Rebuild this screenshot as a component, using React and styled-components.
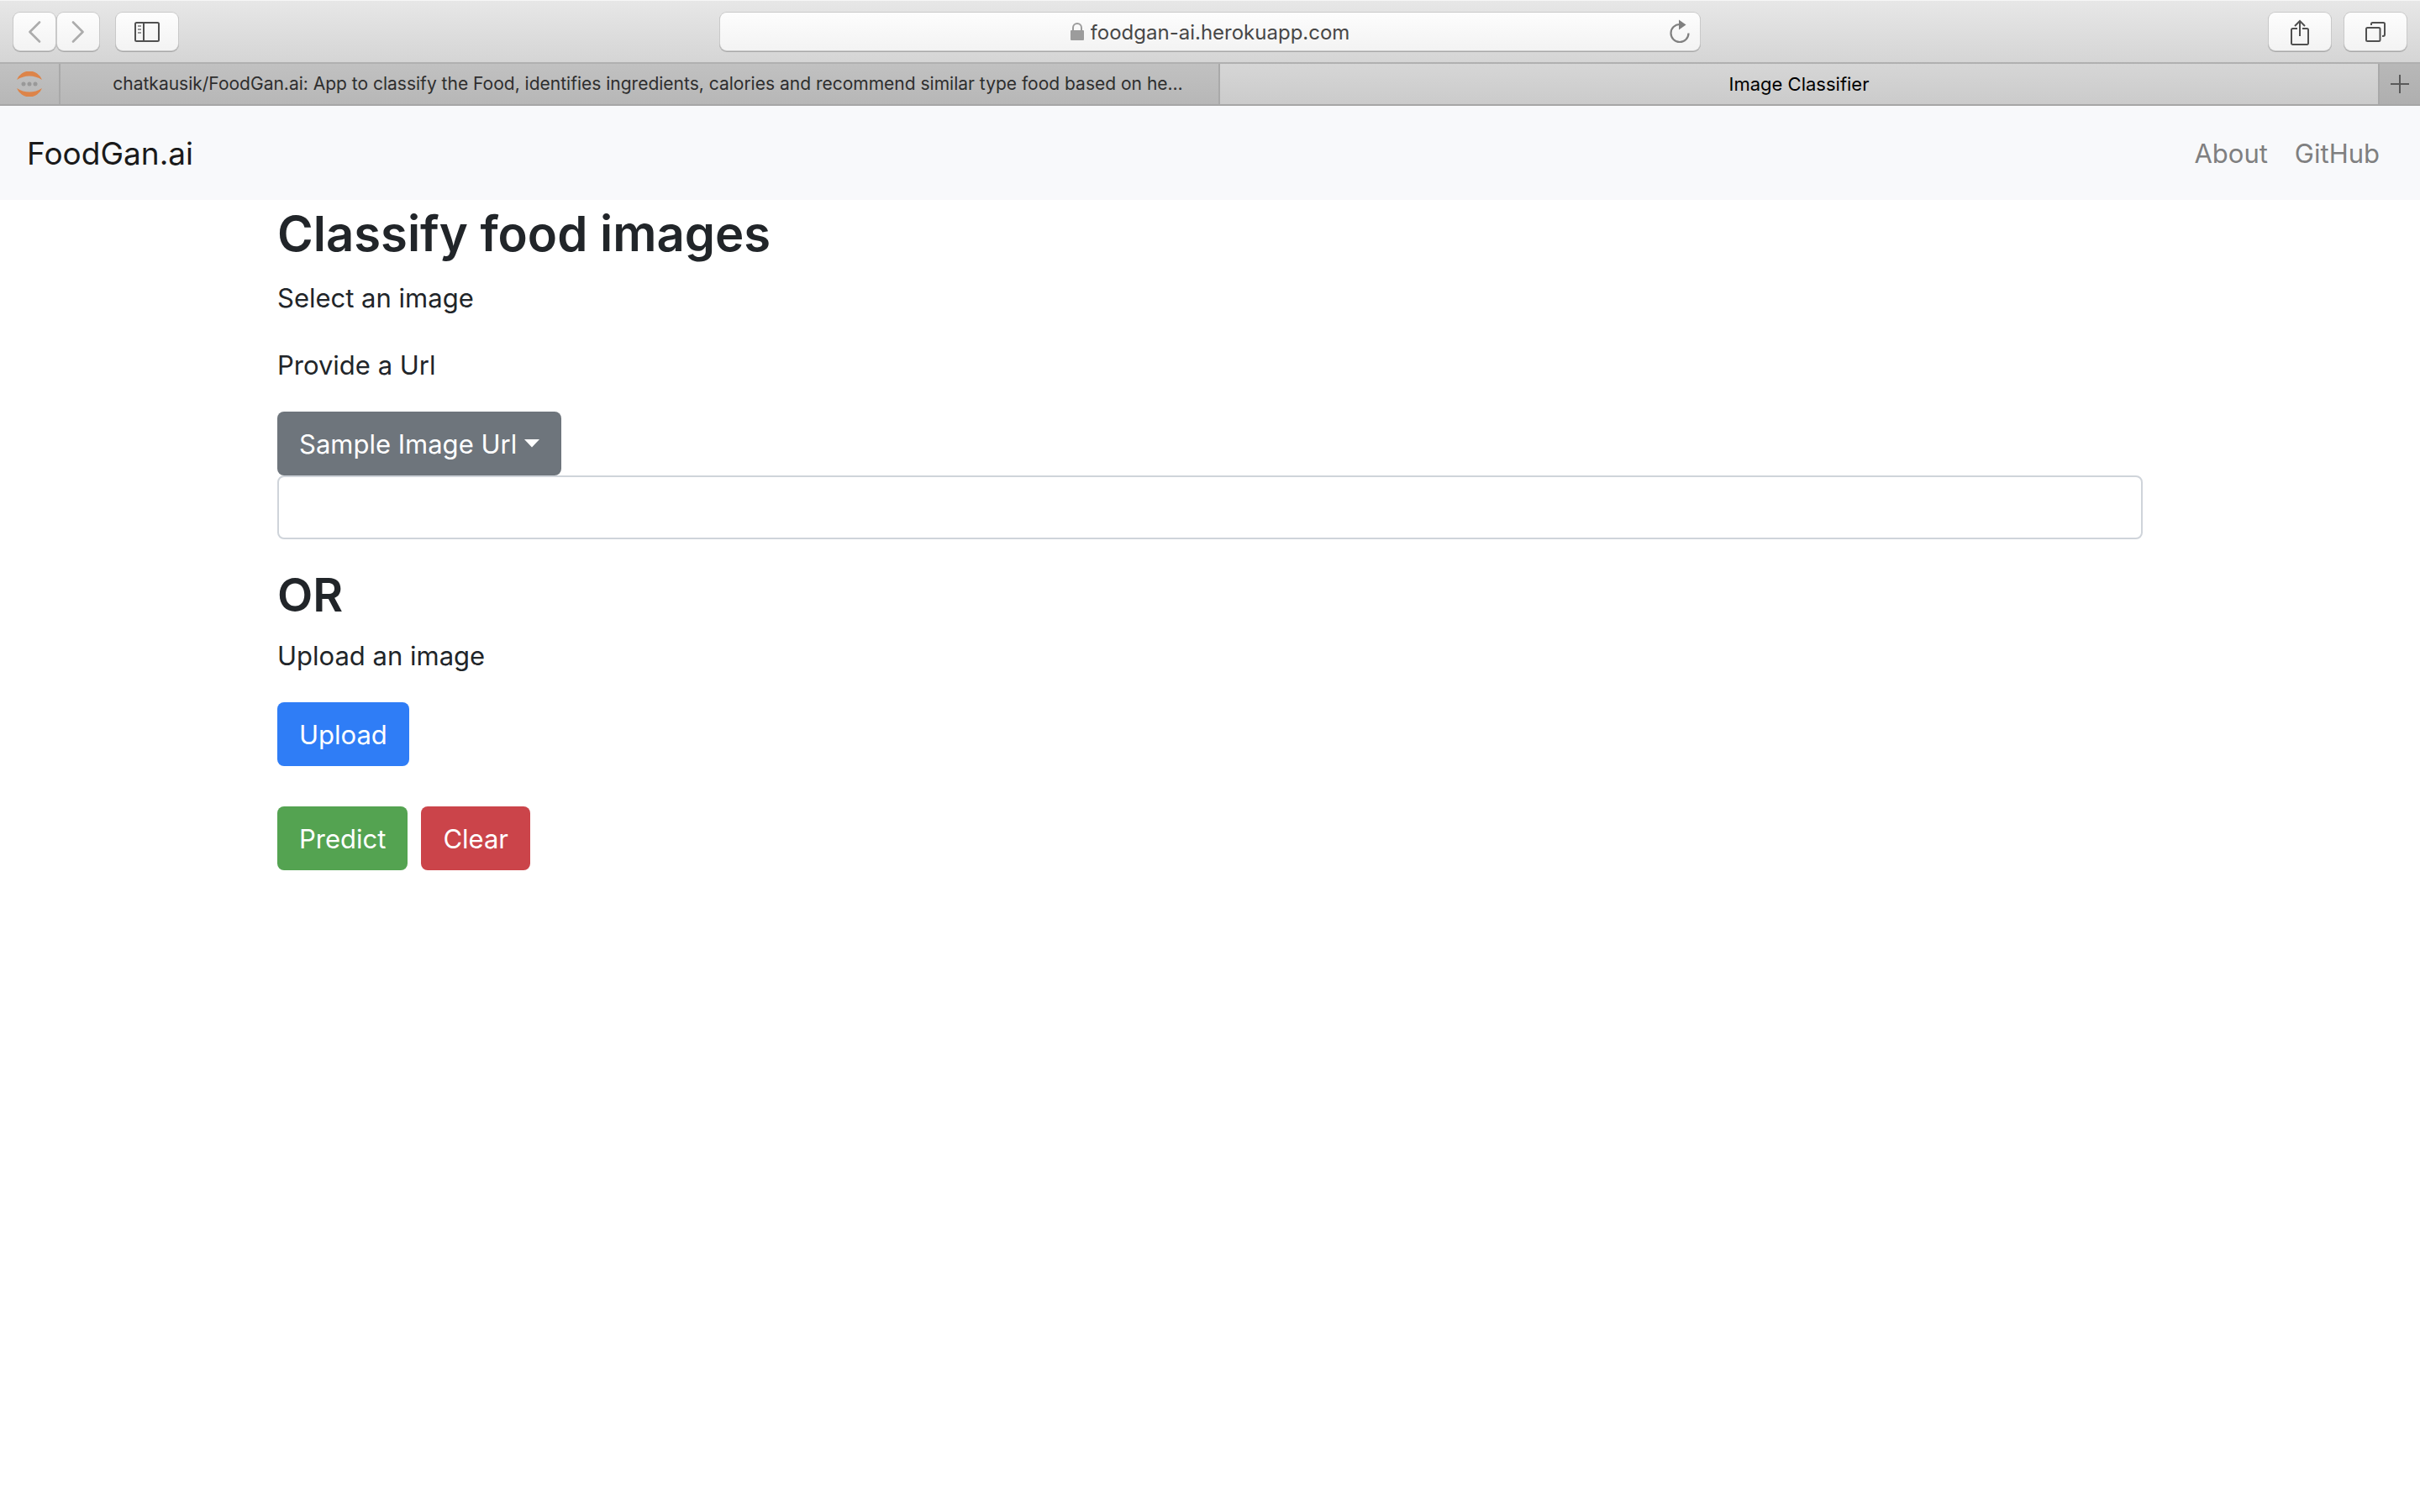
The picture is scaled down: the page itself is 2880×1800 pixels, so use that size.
import React, { useState } from "react";
import styled, { createGlobalStyle } from "styled-components";

const GlobalStyle = createGlobalStyle`
  *, *::before, *::after { box-sizing: border-box; }
  body {
    margin: 0;
    background: #fff;
    color: #212529;
    font-family: Inter, Roboto, "Liberation Sans", sans-serif;
    font-size: 31px;
    line-height: 50px;
  }
  button, input, select { font: inherit; color: inherit; margin: 0; }
`;

/* ---------- Browser window ---------- */

const Toolbar = styled.header`
  display: grid;
  grid-template-columns: 1fr minmax(0, 1166px) 1fr;
  align-items: center;
  height: 76px;
  padding: 0 16px;
  background: linear-gradient(#e7e7e7, #d5d5d5);
  border-top: 1px solid #f6f6f6;
  border-bottom: 2px solid #b0b0b0;
`;

const ToolGroup = styled.div`
  display: flex;
  justify-content: ${(p) => (p.$end ? "flex-end" : "flex-start")};
  gap: ${(p) => (p.$end ? 16 : 20)}px;
`;

const HistoryButtons = styled.div`
  display: flex;
  gap: 2px;
`;

const ToolButton = styled.button`
  display: flex;
  align-items: center;
  justify-content: center;
  width: ${(p) => (p.$wide ? 74 : 50)}px;
  height: 45px;
  padding: 0;
  border: 0;
  border-radius: 8px;
  background: linear-gradient(#fdfdfd, #f3f3f3);
  box-shadow: 0 0 0 1px #c9c9c9, 0 1px 0 1px #a9a9a9;
  color: ${(p) => (p.$muted ? "#acacac" : "#505050")};
`;

const AddressBar = styled.form`
  display: grid;
  grid-template-columns: 1fr auto 1fr;
  align-items: center;
  height: 45px;
  padding: 0 12px;
  border-radius: 8px;
  background: linear-gradient(#fdfdfd, #f3f3f3);
  box-shadow: 0 0 0 1px #c9c9c9, 0 1px 0 1px #a9a9a9;
`;

const Address = styled.label`
  grid-column: 2;
  display: flex;
  align-items: center;
  gap: 8px;
`;

const AddressInput = styled.input`
  field-sizing: content;
  padding: 2px 0 0;
  border: 0;
  outline: 0;
  background: none;
  color: #474747;
  font-size: 24px;
  line-height: 32px;
`;

const ReloadButton = styled.button`
  display: flex;
  justify-self: end;
  padding: 0;
  border: 0;
  background: none;
`;

const TabBar = styled.nav`
  display: grid;
  grid-template-columns: 72px minmax(0, 1fr) minmax(0, 1fr) 48px;
  height: 50px;
  border-bottom: 2px solid #a6a6a6;
  background: linear-gradient(#c1c1c1, #b7b7b7);
`;

const PinnedTab = styled.button`
  display: flex;
  align-items: center;
  justify-content: center;
  padding: 0;
  border: 0;
  border-right: 2px solid #a9a9a9;
  background: none;
`;

const Tab = styled.button`
  padding: 0 ${(p) => (p.$active ? 0 : "26px 0 46px")};
  border: 0;
  border-right: 2px solid #a9a9a9;
  background: ${(p) => (p.$active ? "linear-gradient(#d6d6d6, #cbcbcb)" : "none")};
  color: ${(p) => (p.$active ? "#000" : "#2e2e2e")};
  font-size: ${(p) => (p.$active ? 22 : 21)}px;
  line-height: 48px;
  text-align: center;
  white-space: nowrap;
`;

const NewTab = styled.button`
  display: flex;
  align-items: center;
  justify-content: center;
  padding: 0;
  border: 0;
  background: linear-gradient(#b8b8b8, #afafaf);
  color: #5a5a5a;
`;

/* ---------- Page ---------- */

const Navbar = styled.nav`
  display: flex;
  align-items: center;
  justify-content: space-between;
  padding: 27px 48px 25px 32px;
  background: #f8f9fb;
`;

const Brand = styled.a`
  color: #1a1a1a;
  font-size: 37px;
  line-height: 60px;
  text-decoration: none;
`;

const NavLinks = styled.div`
  display: flex;
  gap: 32px;
`;

const NavLink = styled.a`
  color: #7f7f80;
  text-decoration: none;
`;

const Container = styled.main`
  max-width: 2280px;
  margin: 0 auto;
  padding: 0 30px;
`;

const Title = styled.h1`
  margin: 0 0 12px;
  font-size: 58px;
  line-height: 80px;
  font-weight: 600;
`;

const Divider = styled.h2`
  margin: 0 0 14px;
  font-size: 55px;
  line-height: 68px;
  font-weight: 600;
`;

const Text = styled.p`
  margin: 0 0 30px;
`;

const FieldLabel = styled.label`
  display: block;
  margin: 0 0 30px;
`;

const Dropdown = styled.div`
  display: grid;
  width: max-content;
  align-items: center;
  color: #fff;

  & > * { grid-area: 1 / 1; }
  svg { justify-self: end; margin-right: 26px; pointer-events: none; }
`;

const SampleSelect = styled.select`
  appearance: none;
  height: 76px;
  padding: 2px 52px 0 26px;
  border: 0;
  border-radius: 8px;
  background: #6e757c;
`;

const UrlInput = styled.input`
  display: block;
  width: 100%;
  height: 76px;
  margin: 0 0 32px;
  padding: 12px 24px;
  border: 2px solid #cfd4da;
  border-radius: 8px;
  background: #fff;
`;

const tones = { primary: "#2f7df6", success: "#54a351", danger: "#cb444a" };

const Button = styled.button`
  padding: 14px 26px 12px;
  border: 0;
  border-radius: 8px;
  background: ${(p) => tones[p.$tone]};
  color: #fff;
`;

const Actions = styled.div`
  display: flex;
  gap: 16px;
  margin-bottom: 48px;
`;

/* ---------- Icons ---------- */

const Icon = ({ w, h, sw = 2, children }) => (
  <svg width={w} height={h} viewBox={`0 0 ${w} ${h}`} fill="none" stroke="currentColor" strokeWidth={sw} aria-hidden="true">
    {children}
  </svg>
);

const BackIcon = () => (
  <Icon w={16} h={26} sw={2.6}><path d="M14 1.5 2.5 13 14 24.5" strokeLinecap="round" strokeLinejoin="round" /></Icon>
);
const ForwardIcon = () => (
  <Icon w={16} h={26} sw={2.6}><path d="M2 1.5 13.5 13 2 24.5" strokeLinecap="round" strokeLinejoin="round" /></Icon>
);
const SidebarIcon = () => (
  <Icon w={30} h={24}>
    <rect x="1" y="1" width="28" height="22" rx="1.5" />
    <path d="M11 1v22" />
    <path d="M4 5h4M4 9h4M4 13h4" strokeWidth="1.6" stroke="#777" />
  </Icon>
);
const ShareIcon = () => (
  <Icon w={24} h={32}>
    <path d="M9 12H3.5a1.5 1.5 0 0 0-1.5 1.5v16A1.5 1.5 0 0 0 3.5 31h17a1.5 1.5 0 0 0 1.5-1.5v-16a1.5 1.5 0 0 0-1.5-1.5H15" />
    <path d="M12 21V3M6 9l6-6 6 6" />
  </Icon>
);
const TabsIcon = () => (
  <Icon w={24} h={24}>
    <rect x="1" y="7" width="16.5" height="16" rx="1.5" />
    <path d="M7 4V2.500A1.500 1.500 0 0 1 8.500 1h13A1.500 1.500 0 0 1 23 2.500V15a2 2 0 0 1-2 2h-1" />
  </Icon>
);
const LockIcon = () => (
  <svg width="16" height="22" viewBox="0 0 16 22" aria-hidden="true">
    <rect x="0" y="9" width="16" height="12" rx="1" fill="#9c9c9c" />
    <path d="M3 10V6a5 5 0 0 1 10 0v4" fill="none" stroke="#9c9c9c" strokeWidth="2" />
  </svg>
);
const ReloadIcon = () => (
  <svg width="24" height="32" viewBox="0 0 24 32" aria-hidden="true">
    <path d="M12 7A10.500 10.500 0 1 0 22.500 17.500" fill="none" stroke="#808080" strokeWidth="2.200" />
    <path d="M11 1.500v12l8.500-6z" fill="#808080" />
  </svg>
);
const JupyterIcon = () => (
  <svg width="30" height="30" viewBox="0 0 30 30" aria-hidden="true">
    <path d="M0 10A16 16 0 0 1 30 10Q23 5.500 15 5.500T0 10Z" fill="#dd8449" />
    <path d="M0 20A16 16 0 0 0 30 20Q23 24.500 15 24.500T0 20Z" fill="#dd8449" />
    <g fill="#999">
      <circle cx="8" cy="15" r="2.500" />
      <circle cx="15" cy="15" r="2.500" />
      <circle cx="22" cy="15" r="2.500" />
    </g>
  </svg>
);
const PlusIcon = () => (
  <Icon w={22} h={22}><path d="M11 0v22M0 11h22" /></Icon>
);
const CaretIcon = () => (
  <svg width="18" height="10" viewBox="0 0 18 10" aria-hidden="true">
    <path d="M0 0h18L9 9.500z" fill="currentColor" />
  </svg>
);

export default function App() {
  const [url, setUrl] = useState("");
  return (
    <>
      <GlobalStyle />
      <Toolbar>
        <ToolGroup>
          <HistoryButtons>
            <ToolButton $muted aria-label="Back"><BackIcon /></ToolButton>
            <ToolButton $muted aria-label="Forward"><ForwardIcon /></ToolButton>
          </HistoryButtons>
          <ToolButton $wide aria-label="Sidebar"><SidebarIcon /></ToolButton>
        </ToolGroup>
        <AddressBar onSubmit={(e) => e.preventDefault()}>
          <Address>
            <LockIcon />
            <AddressInput type="text" aria-label="Address" defaultValue="foodgan-ai.herokuapp.com" />
          </Address>
          <ReloadButton type="button" aria-label="Reload"><ReloadIcon /></ReloadButton>
        </AddressBar>
        <ToolGroup $end>
          <ToolButton $wide aria-label="Share"><ShareIcon /></ToolButton>
          <ToolButton $wide aria-label="Show all tabs"><TabsIcon /></ToolButton>
        </ToolGroup>
      </Toolbar>
      <TabBar>
        <PinnedTab aria-label="Jupyter"><JupyterIcon /></PinnedTab>
        <Tab>chatkausik/FoodGan.ai: App to classify the Food, identifies ingredients, calories and recommend similar type food based on he…</Tab>
        <Tab $active>Image Classifier</Tab>
        <NewTab aria-label="New tab"><PlusIcon /></NewTab>
      </TabBar>

      <Navbar>
        <Brand href="#">FoodGan.ai</Brand>
        <NavLinks>
          <NavLink href="#about">About</NavLink>
          <NavLink href="#github">GitHub</NavLink>
        </NavLinks>
      </Navbar>
      <Container>
        <Title>Classify food images</Title>
        <Text>Select an image</Text>
        <FieldLabel htmlFor="image-url">Provide a Url</FieldLabel>
        <Dropdown>
          <SampleSelect aria-label="Sample Image Url">
            <option>Sample Image Url</option>
          </SampleSelect>
          <CaretIcon />
        </Dropdown>
        <UrlInput id="image-url" type="text" value={url} onChange={(e) => setUrl(e.target.value)} />
        <Divider>OR</Divider>
        <Text>Upload an image</Text>
        <Actions>
          <Button type="button" $tone="primary">Upload</Button>
        </Actions>
        <Actions>
          <Button type="button" $tone="success">Predict</Button>
          <Button type="button" $tone="danger" onClick={() => setUrl("")}>Clear</Button>
        </Actions>
      </Container>
    </>
  );
}
